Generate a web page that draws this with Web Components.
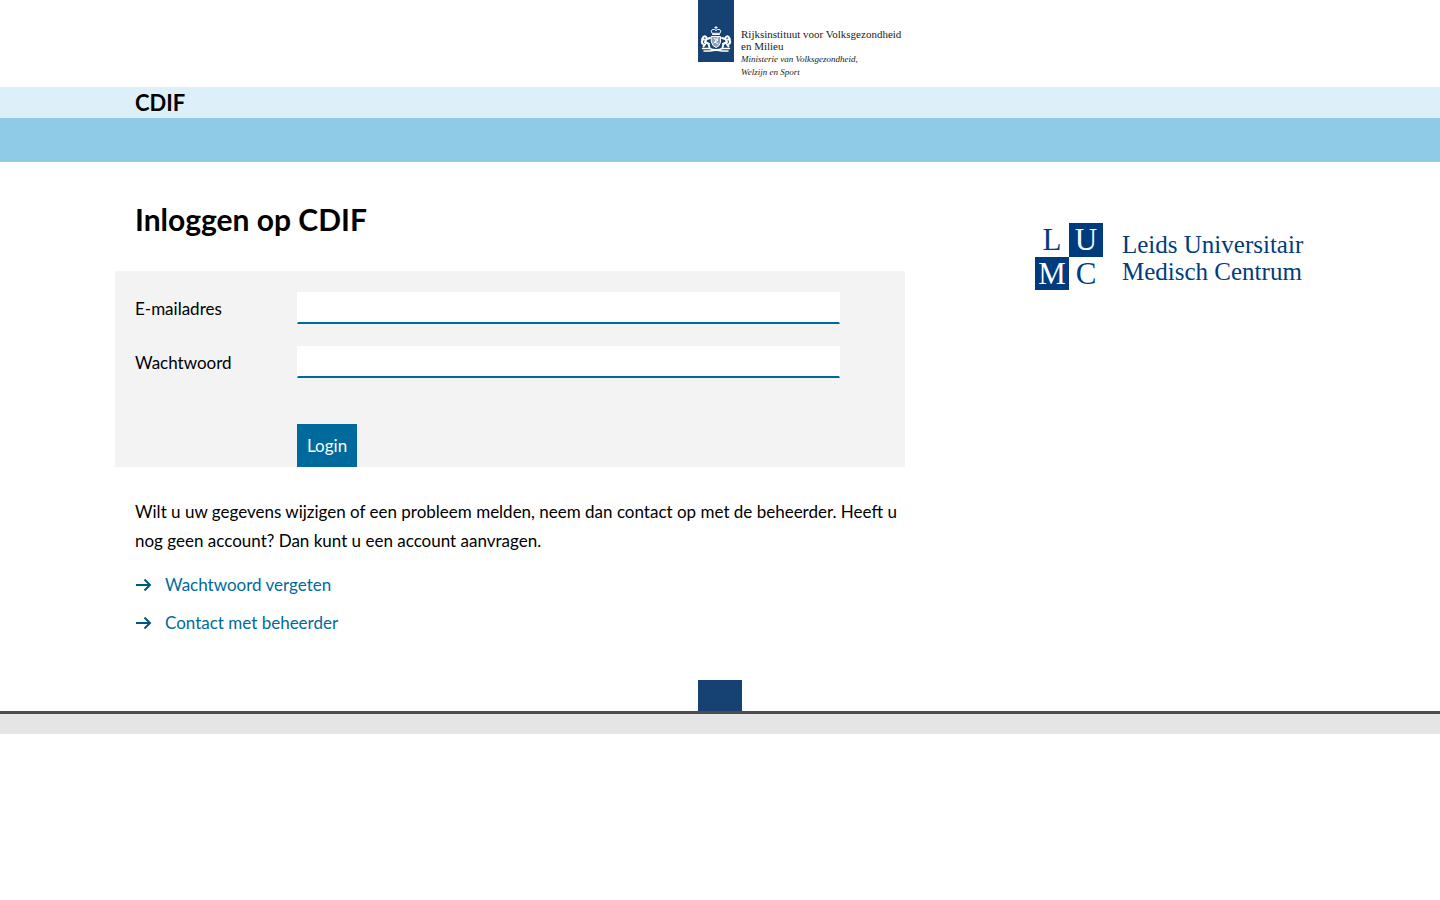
<!DOCTYPE html>
<html lang="nl">
<head>
<meta charset="utf-8">
<title>Inloggen op CDIF</title>
<style>
body { margin: 0; background: #fff; color: #000; font: 17px/29px Lato, "Noto Sans", sans-serif; }
</style>
</head>
<body>
<cdif-page></cdif-page>
<script>
const define = (name, html) => {
  const template = document.createElement('template');
  template.innerHTML = html;
  customElements.define(name, class extends HTMLElement {
    constructor() {
      super();
      this.attachShadow({ mode: 'open' }).append(template.content.cloneNode(true));
    }
  });
};

define('rijks-logo', `
<style>
:host { display: flex; gap: 7px; height: 87px; margin-left: calc(50% - 22px); color: #222; }
svg { display: block; width: 36px; height: 62px; flex: none; }
p { margin: 0; padding-top: 28px; font: 11px/12px "Liberation Serif", serif; white-space: nowrap; }
em { font-size: 9px; }
</style>
<svg viewBox="0 0 36 62" aria-hidden="true">
  <path fill="#154273" d="M0 0h36v62H0z"/>
  <g fill="none" stroke="#fff" stroke-width="1" stroke-linecap="round">
    <path d="M18 26.500v2.500M16.800 27.500h2.400M14 33q-2-3 1-3.500 1.500-.5 3 1 1.500-1.500 3-1 3 .5 1 3.500zM14.500 34.500h7"/>
    <path d="M13.500 36.500h9v6q-1 4-4.500 5-3.500-1-4.500-5z" fill="#8ba0ba"/>
    <path d="M16 38.500l4 1.500-3 2 3 2M20 37.500l-4 5.500"/>
    <path stroke-width="2" d="M5 37.500q1-2 3-.5l1 2 3-1M8.500 39l-1.500 3 4 2M8 43l-2.500 3.500M10.500 44l1 3.500M5 44q-2-1.500-.5-4M4 39l2 .500M31 37.500q-1-2-3-.5l-1 2-3-1M27.500 39l1.500 3-4 2M28 43l2.500 3.500M25.500 44l-1 3.500M31 44q2-1.500 .500-4M32 39l-2 .500"/>
    <path stroke-width="1.500" d="M4.500 48.500h7q6.500 2.500 13 0h7M6 51h6q6-1.500 12 0h6"/>
  </g>
</svg>
<p>Rijksinstituut voor Volksgezondheid<br>en Milieu<br><em>Ministerie van Volksgezondheid,<br>Welzijn en Sport</em></p>`);

define('site-header', `
<style>
:host { display: block; }
.title { background: #ddeff8; }
.title p { max-width: 1170px; margin: 0 auto; font-size: 22px; line-height: 31px; font-weight: 700; }
nav { height: 44px; background: #8fcae7; }
</style>
<rijks-logo></rijks-logo>
<div class="title"><p>CDIF</p></div>
<nav aria-label="Hoofdmenu"></nav>`);

define('login-form', `
<style>
:host { display: block; margin-left: -20px; background: #f3f3f3; }
form { display: grid; grid-template-columns: 162px minmax(0, 543px); row-gap: 22px; padding: 21px 65px 0 20px; align-items: center; }
input { box-sizing: border-box; width: 100%; height: 32px; margin: 0; padding: 0 8px; border: 1px solid #fff; border-bottom: 2px solid #006a9d; border-radius: 0; background: #fff; font: inherit; outline: none; }
button { grid-column: 2; justify-self: start; height: 43px; margin: 24px 0 0; padding: 0 10px; border: 0; background: #006a9d; color: #fff; font: inherit; }
</style>
<form>
  <label for="email">E-mailadres</label><input id="email" type="email">
  <label for="password">Wachtwoord</label><input id="password" type="password">
  <button type="button">Login</button>
</form>`);

define('arrow-link', `
<style>
:host { display: flex; }
a { display: flex; align-items: center; gap: 13px; color: #006a9d; text-decoration: none; }
svg { width: 17px; height: 14px; }
</style>
<a href="#"><svg viewBox="0 0 17 14" fill="none" stroke="#00577f" stroke-width="2" aria-hidden="true"><path d="M1 7h14M9.500 1.500l5.500 5.500-5.500 5.500"/></svg><span><slot></slot></span></a>`);

define('lumc-logo', `
<style>
:host { display: flex; width: 270px; gap: 19px; color: #003c7d; font-family: "Liberation Serif", serif; }
.mark { display: grid; grid-template: 34px 33px / 34px 34px; flex: none; font-size: 31px; line-height: 34px; text-align: center; }
.mark b { background: #003c7d; color: #fff; font-weight: 400; }
p { margin: 0; padding-top: 8px; font-size: 25px; line-height: 27px; white-space: nowrap; }
</style>
<div class="mark"><span>L</span><b>U</b><b>M</b><span>C</span></div>
<p>Leids Universitair<br>Medisch Centrum</p>`);

define('site-footer', `
<style>
:host { display: block; height: 20px; border-top: 3px solid #4c4c4c; background: #e5e5e5; }
</style>`);

define('cdif-page', `
<style>
:host { display: block; }
main { display: flex; justify-content: space-between; max-width: 1170px; margin: 0 auto; padding: 37px 0 43px; }
section { flex: 0 1 770px; }
h1 { margin: 0 0 32px; font-size: 30px; line-height: 40px; }
p { margin: 30px 0 15px; }
arrow-link + arrow-link { margin-top: 9px; }
lumc-logo { margin-top: 24px; }
.block { width: 44px; height: 31px; margin: 0 auto; background: #154273; }
</style>
<site-header></site-header>
<main>
  <section>
    <h1>Inloggen op CDIF</h1>
    <login-form></login-form>
    <p>Wilt u uw gegevens wijzigen of een probleem melden, neem dan contact op met de beheerder. Heeft u nog geen account? Dan kunt u een account aanvragen.</p>
    <arrow-link>Wachtwoord vergeten</arrow-link>
    <arrow-link>Contact met beheerder</arrow-link>
  </section>
  <aside><lumc-logo></lumc-logo></aside>
</main>
<div class="block"></div>
<site-footer></site-footer>`);
</script>
</body>
</html>
